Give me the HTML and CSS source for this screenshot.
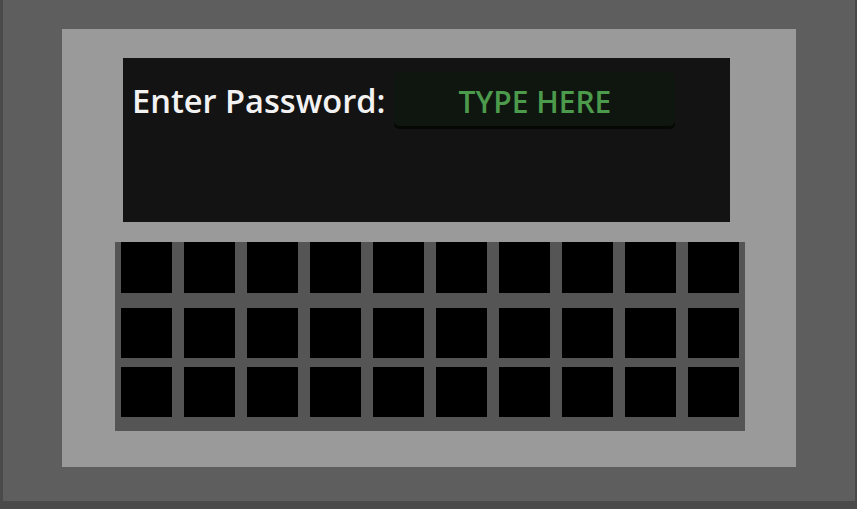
FILE: index.html
```html
<!DOCTYPE html>
<html>
<head>
<meta charset="utf-8">
<link rel="stylesheet" href="styles.css">
</head>
<body>
<div class="frame">
  <div class="panel">
    <div class="screen">
      <div class="row">
        <span class="label">Enter Password:</span>
        <div class="input">TYPE HERE</div>
      </div>
    </div>
    <div class="keyboard">
      <div class="keys r1">
        <div class="key"></div><div class="key"></div><div class="key"></div><div class="key"></div><div class="key"></div>
        <div class="key"></div><div class="key"></div><div class="key"></div><div class="key"></div><div class="key"></div>
      </div>
      <div class="keys r2">
        <div class="key"></div><div class="key"></div><div class="key"></div><div class="key"></div><div class="key"></div>
        <div class="key"></div><div class="key"></div><div class="key"></div><div class="key"></div><div class="key"></div>
      </div>
      <div class="keys r3">
        <div class="key"></div><div class="key"></div><div class="key"></div><div class="key"></div><div class="key"></div>
        <div class="key"></div><div class="key"></div><div class="key"></div><div class="key"></div><div class="key"></div>
      </div>
    </div>
  </div>
</div>
</body>
</html>
```

FILE: styles.css
```css
html, body {
  margin: 0;
  padding: 0;
}
body {
  background: #4a4a4a;
  width: 857px;
  height: 509px;
  overflow: hidden;
  font-family: "Open Sans", "Noto Sans", sans-serif;
}
.frame {
  margin-left: 3px;
  width: 852px;
  height: 501px;
  background: #5e5e5e;
  box-sizing: border-box;
  padding: 29px 0 0 59px;
}
.panel {
  width: 734px;
  height: 438px;
  background: #9a9a9a;
  box-sizing: border-box;
  padding-top: 29px;
  display: flex;
  flex-direction: column;
}
.screen {
  margin-left: 61px;
  width: 607px;
  height: 164px;
  background: #131313;
  box-sizing: border-box;
  padding: 14px 0 0 9px;
}
.row {
  display: flex;
  align-items: center;
  gap: 9px;
}
.label {
  color: #f2f2f2;
  font-size: 32.6px;
  font-weight: 600;
  line-height: 54px;
  position: relative;
  top: 2px;
}
.input {
  width: 281px;
  height: 54px;
  background: #0f150f;
  border-radius: 5px;
  box-shadow: 0 3px 0 #050805;
  color: #4c9a4c;
  font-size: 30px;
  font-weight: 600;
  line-height: 60px;
  text-align: center;
  box-sizing: border-box;
}
.keyboard {
  margin-left: 53px;
  margin-top: 20px;
  width: 630px;
  height: 189px;
  background: #555555;
  box-sizing: border-box;
  padding: 0 6px;
  display: flex;
  flex-direction: column;
}
.keys {
  display: flex;
  gap: 12px;
}
.key {
  width: 51px;
  background: #000;
}
.r1 { height: 51px; }
.r2 { height: 50px; margin-top: 15px; }
.r3 { height: 50px; margin-top: 9px; }
```
